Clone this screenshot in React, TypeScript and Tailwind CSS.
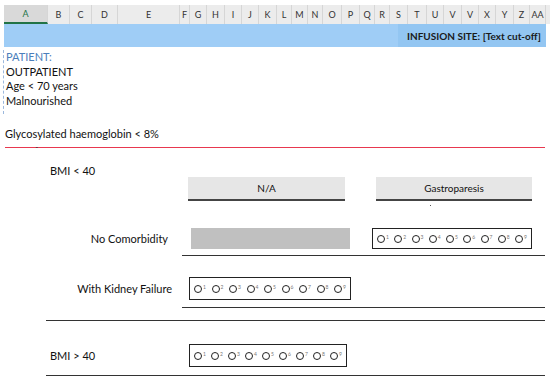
const columns: { label: string; w: string; active?: boolean }[] = [
    { label: 'A', w: 'w-[44px]', active: true },
    { label: 'B', w: 'w-[22px]' },
    { label: 'C', w: 'w-[22px]' },
    { label: 'D', w: 'w-[26px]' },
    { label: 'E', w: 'w-[62px]' },
    { label: 'F', w: 'w-[10px]' },
    { label: 'G', w: 'w-[17px]' },
    { label: 'H', w: 'w-[18px]' },
    { label: 'I', w: 'w-[17px]' },
    { label: 'J', w: 'w-[17px]' },
    { label: 'K', w: 'w-[18px]' },
    { label: 'L', w: 'w-[15px]' },
    { label: 'M', w: 'w-[16px]' },
    { label: 'N', w: 'w-[15px]' },
    { label: 'O', w: 'w-[19px]' },
    { label: 'P', w: 'w-[18px]' },
    { label: 'Q', w: 'w-[15px]' },
    { label: 'R', w: 'w-[15px]' },
    { label: 'S', w: 'w-[18px]' },
    { label: 'T', w: 'w-[19px]' },
    { label: 'U', w: 'w-[17px]' },
    { label: 'V', w: 'w-[18px]' },
    { label: 'V', w: 'w-[17px]' },
    { label: 'X', w: 'w-[17px]' },
    { label: 'Y', w: 'w-[18px]' },
    { label: 'Z', w: 'w-[16px]' },
    { label: 'AA', w: 'w-[16px]' },
]

const RadioScale = ({ className }: { className: string }) => (
    <div className={`flex items-center justify-between px-[4px] border border-[#222] ${className}`}>
        {[1, 2, 3, 4, 5, 6, 7, 8, 9].map((n) => (
            <span key={n} className="flex items-center">
                <span className="w-[8px] h-[8px] rounded-full border-[1.5px] border-[#222]" />
                <span className="ml-[1px] -mt-[2px] text-[5px] leading-none text-[#777]">{n}</span>
            </span>
        ))}
    </div>
)

export default function App() {
    return (
        <div className="w-[550px] h-[377px] overflow-hidden bg-white text-[#111] text-[11px] leading-none" style={{ fontFamily: 'Lato, "Open Sans", sans-serif' }}>
            {/* column header strip */}
            <div className="mt-[5px] ml-[4px] h-[19px] flex bg-[#ececec] text-[9px] text-[#333]">
                {columns.map((c, i) => (
                    <div key={i} className={`${c.w} shrink-0 flex items-center justify-center border-r border-[#d6d6d6] ${c.active ? 'bg-[#d9d9d9] border-b-2 border-b-[#217346] text-[#217346]' : ''}`}>
                        {c.label}
                    </div>
                ))}
            </div>

            {/* blue banner */}
            <div className="ml-[4px] w-[542px] h-[23px] flex justify-end bg-[#9fcdf6]">
                <div className="w-[148px] flex items-center pl-[9px] bg-[#93c6f2] text-[10px] font-bold text-[#1a1a1a] whitespace-nowrap">
                    INFUSION SITE: [Text cut-off]
                </div>
            </div>

            {/* patient info */}
            <div className="mt-[3px] ml-[3px] pl-[2px] border-l border-dashed border-[#9bb8dd] text-[11px] leading-[14.5px] w-[200px] pb-[6px]">
                <p className="text-[#4a7ebb]">PATIENT:</p>
                <p>OUTPATIENT</p>
                <p>Age &lt; 70 years</p>
                <p>Malnourished</p>
            </div>

            <p className="mt-[13px] ml-[5px] text-[11px] leading-[14px]">Glycosylated haemoglobin &lt; 8%</p>
            <div className="relative mt-[6px] ml-[5px] w-[540px] h-[1px] bg-[#e8384f]">
                <span className="absolute left-[30px] -top-[1px] text-[8px] leading-none text-[#333]">ˇ</span>
            </div>

            {/* BMI < 40 */}
            <p className="mt-[17px] ml-[50px] leading-[12px]">BMI &lt; 40</p>

            <div className="flex">
                <div className="ml-[188px] w-[157px] h-[24px] flex items-center justify-center bg-[#e6e6e6] border-b-2 border-[#444] text-[10px]">N/A</div>
                <div className="ml-[31px] w-[156px] h-[24px] flex items-center justify-center bg-[#e6e6e6] border-b-2 border-[#444] text-[10px]">Gastroparesis</div>
            </div>
            <div className="ml-[430px] mt-[4px] w-[1px] h-[1px] bg-[#555]" />

            <div className="mt-[22px] flex items-center">
                <p className="w-[168px] text-right">No Comorbidity</p>
                <div className="ml-[23px] w-[159px] h-[21px] bg-[#c0c0c0]" />
                <RadioScale className="ml-[22px] w-[160px] h-[21px]" />
            </div>
            <div className="mt-[6px] ml-[182px] w-[363px] border-t border-[#333]" />

            <div className="mt-[21px] flex items-center">
                <p className="w-[172px] text-right">With Kidney Failure</p>
                <RadioScale className="ml-[17px] w-[162px] h-[23px]" />
            </div>
            <div className="mt-[7px] ml-[182px] w-[363px] border-t border-[#333]" />
            <div className="mt-[12px] ml-[46px] w-[499px] border-t border-[#333]" />

            {/* BMI > 40 */}
            <div className="mt-[23px] flex items-center">
                <p className="ml-[50px] w-[139px]">BMI &gt; 40</p>
                <RadioScale className="w-[158px] h-[23px]" />
            </div>
            <div className="mt-[8px] ml-[46px] w-[499px] border-t border-[#333]" />
        </div>
    )
}
